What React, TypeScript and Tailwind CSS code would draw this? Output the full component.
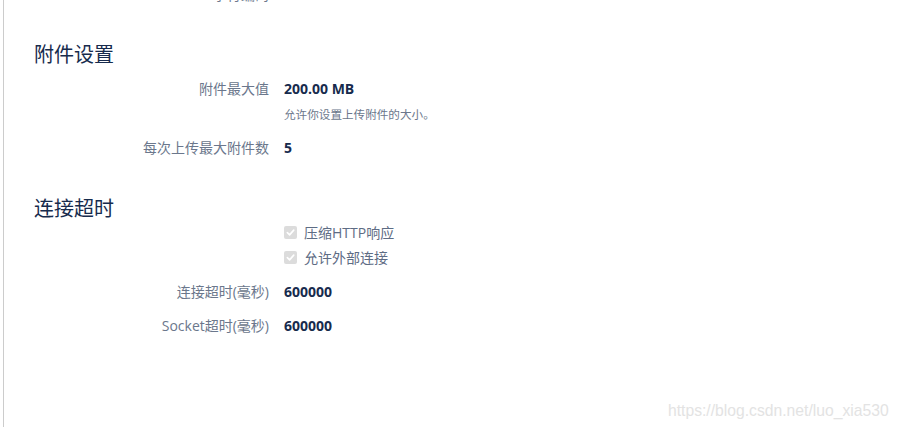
import React from 'react';

const font = { fontFamily: '"Open Sans", "Noto Sans CJK SC", sans-serif' };

const Row = ({ label, value, className = '' }: { label: string; value: string; className?: string }) => (
  <div className={`flex items-center h-5 ${className}`}>
    <div className="w-[235px] shrink-0 text-right text-[14px] text-[#6b778c] mr-[15px]">{label}</div>
    <div className="text-[14px] font-bold text-[#172b4d]">{value}</div>
  </div>
);

const Check = ({ label, className = '' }: { label: string; className?: string }) => (
  <div className={`flex items-center h-5 ${className}`}>
    <div className="w-[250px] shrink-0" />
    <span className="w-[13px] h-[13px] rounded-[2px] bg-[#dcdcdc] flex items-center justify-center">
      <svg width="9" height="9" viewBox="0 0 10 10" fill="none">
        <path d="M1.5 5.2 L4 7.6 L8.6 2.4" stroke="#ffffff" strokeWidth="1.8" strokeLinecap="round" strokeLinejoin="round" />
      </svg>
    </span>
    <span className="ml-[7px] text-[14px] text-[#5e6c84]">{label}</span>
  </div>
);

export default function App() {
  return (
    <div style={font} className="w-[901px] h-[427px] overflow-hidden bg-white relative">
      <div className="ml-[3px] h-full border-l border-[#cccccc] pl-[30px] flex flex-col">
        {/* row cut off at the top edge */}
        <div className="flex items-center h-5 -mt-[16px]">
          <div className="w-[235px] text-right text-[14px] text-[#6b778c]">字符编码</div>
        </div>

        <h2 className="mt-[37px] h-7 leading-7 text-[20px] text-[#172b4d]">附件设置</h2>
        <Row className="mt-[9px]" label="附件最大值" value="200.00 MB" />
        <div className="mt-[9px] h-4 leading-4 pl-[250px] text-[11.6px] text-[#6b778c]">允许你设置上传附件的大小。</div>
        <Row className="mt-[14px]" label="每次上传最大附件数" value="5" />

        <h2 className="mt-[38px] h-7 leading-7 text-[20px] text-[#172b4d]">连接超时</h2>
        <Check className="mt-[-1px]" label="压缩HTTP响应" />
        <Check className="mt-[5px]" label="允许外部连接" />
        <Row className="mt-[14px]" label="连接超时(毫秒)" value="600000" />
        <Row className="mt-[14px]" label="Socket超时(毫秒)" value="600000" />
      </div>
      <div
        className="absolute left-[668px] top-[399px] text-[15.7px] text-[#e3e3e3]"
        style={{ fontFamily: '"Liberation Sans", Arial, sans-serif' }}
      >
        https://blog.csdn.net/luo_xia530
      </div>
    </div>
  );
}
